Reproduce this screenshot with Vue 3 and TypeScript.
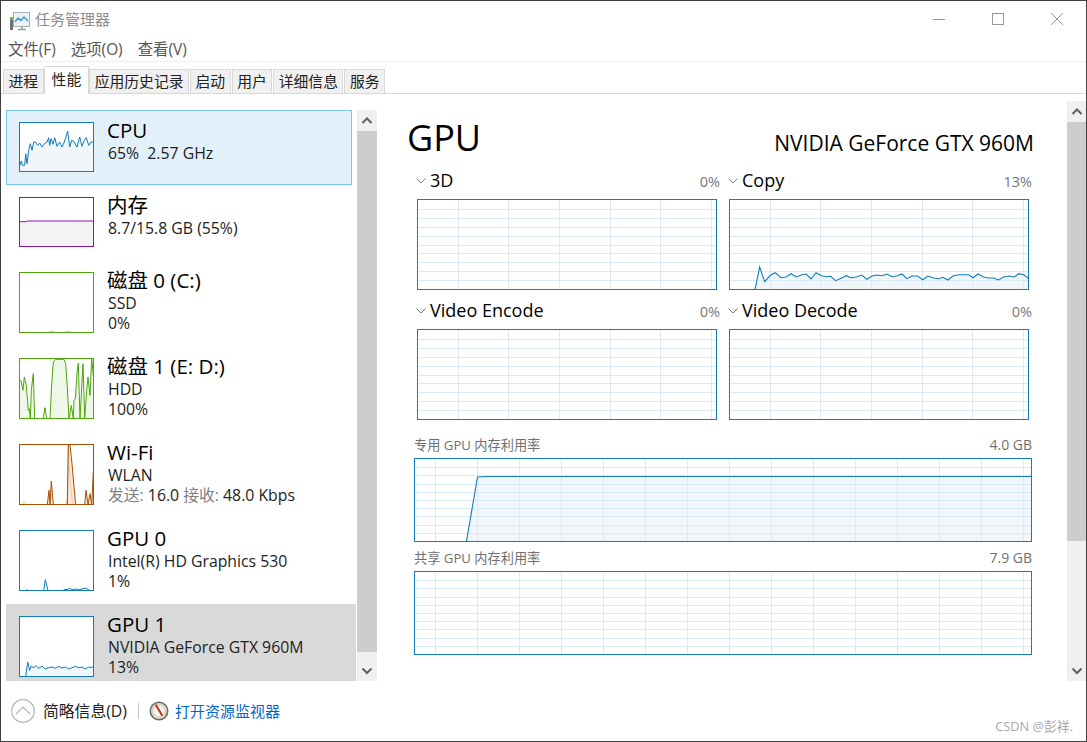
<script setup lang="ts">
interface Thumb {
  key: string
  name: string
  lines: { text: string; muted?: boolean }[][]
  tall: boolean
  state: string
  tone: string
  h: number
  x0: number
  y0: number
  pts: number[]
  extra?: number[]
}

function conv(raw: number[], x0: number, y0: number): number[][] {
  const out: number[][] = []
  for (let i = 0; i < raw.length; i += 2) {
    out.push([+((raw[i] - x0) / 3).toFixed(1), +((raw[i + 1] - y0) / 3).toFixed(1)])
  }
  return out
}
const line = (p: number[][]) => p.map((q) => q.join(',')).join(' ')
function area(p: number[][], bottom: number) {
  if (!p.length) return ''
  return `${p[0][0]},${bottom} ${line(p)} ${p[p.length - 1][0]},${bottom}`
}

const tabs = ['进程', '性能', '应用历史记录', '启动', '用户', '详细信息', '服务']

const items: Thumb[] = [
  {
    key: 'cpu', name: 'CPU', tall: false, state: 'hover', tone: 'blue', h: 48, x0: 59, y0: 368,
    lines: [[{ text: '65%  2.57 GHz' }]],
    pts: [59,495,63,482,66,495,73,495,76,460,80,490,85,450,90,430,95,450,100,425,105,425,112,435,118,428,125,440,132,430,140,425,145,412,148,435,152,415,158,432,163,412,170,438,178,425,185,440,192,425,202,392,208,440,214,420,222,425,230,440,238,410,245,438,252,420,258,412,265,435,272,425,280,425],
  },
  {
    key: 'mem', name: '内存', tall: false, state: '', tone: 'purple', h: 48, x0: 59, y0: 23,
    lines: [[{ text: '8.7/15.8 GB (55%)' }]],
    pts: [59,94,78,94,80,92,280,92],
  },
  {
    key: 'd0', name: '磁盘 0 (C:)', tall: true, state: '', tone: 'green', h: 59, x0: 59, y0: 248,
    lines: [[{ text: 'SSD' }], [{ text: '0%' }]],
    pts: [59,427,146,427,150,424,153,427,156,423,160,427,194,427,198,424,202,427,206,424,210,427,280,427],
  },
  {
    key: 'd1', name: '磁盘 1 (E: D:)', tall: true, state: '', tone: 'green', h: 59, x0: 28, y0: 26,
    lines: [[{ text: 'HDD' }], [{ text: '100%' }]],
    pts: [28,90,31,92,37,120,41,80,47,105,53,180,56,175,59,205,62,120,68,70,72,205,97,205,103,172,108,205,118,205,123,100,128,35,135,27,160,27,165,40,170,110,175,205,182,165,188,205,190,150,194,145,200,60,203,38,208,205,217,40,222,205,228,120,232,80,238,135,243,25,248,75,250,50],
  },
  {
    key: 'wifi', name: 'Wi-Fi', tall: true, state: '', tone: 'orange', h: 59, x0: 28, y0: 284,
    lines: [[{ text: 'WLAN' }], [{ text: '发送:', muted: true }, { text: ' 16.0 ' }, { text: '接收:', muted: true }, { text: ' 48.0 Kbps' }]],
    pts: [28,463,110,463,115,420,118,463,122,392,128,463,170,463,173,285,178,285,184,340,190,410,195,463,222,463,226,420,232,463,238,430,243,463,248,365,250,365],
    extra: [33,463,40,452,45,463,165,463,168,450,171,463,173,285,176,350,180,410,186,463],
  },
  {
    key: 'g0', name: 'GPU 0', tall: true, state: '', tone: 'blue', h: 59, x0: 59, y0: 302,
    lines: [[{ text: 'Intel(R) HD Graphics 530' }], [{ text: '1%' }]],
    pts: [59,481,76,481,80,478,84,481,130,481,135,448,143,481,188,481,192,477,200,478,208,474,215,478,225,476,235,478,245,476,255,473,265,478,270,481,280,481],
  },
  {
    key: 'g1', name: 'GPU 1', tall: true, state: 'active', tone: 'blue', h: 59, x0: 59, y0: 560,
    lines: [[{ text: 'NVIDIA GeForce GTX 960M' }], [{ text: '13%' }]],
    pts: [76,739,82,695,88,720,92,708,100,712,108,706,115,714,125,708,135,716,145,712,155,710,165,714,175,708,185,713,195,710,205,716,215,712,225,708,235,712,245,710,255,716,265,710,272,712,280,707],
  },
]

const view = items.map((it) => {
  const p = conv(it.pts, it.x0, it.y0)
  return {
    ...it,
    poly: line(p),
    fill: area(p, it.h),
    extraLine: it.extra ? line(conv(it.extra, it.x0, it.y0)) : '',
  }
})

const engineV = [40.5, 90.5, 141.5, 192.5, 242.5, 293.5]
const engineH = Array.from({ length: 9 }, (_, i) => Math.round(8.9 * (i + 1)) + 0.5)
const memV = Array.from({ length: 15 }, (_, i) => 20.5 + 42 * i).filter((v) => v < 616)
const memH = Array.from({ length: 9 }, (_, i) => Math.round(8.2 * (i + 1)) + 0.5)

const copyRaw = [104,358,118,290,133,334,150,315,165,307,182,322,197,320,212,310,228,320,245,313,258,311,272,326,287,307,303,316,318,319,331,318,346,331,362,324,378,316,392,322,408,320,424,314,440,327,455,317,470,314,485,316,500,311,515,319,530,316,545,311,560,325,575,317,592,317,607,328,622,317,640,323,655,325,668,321,682,329,698,317,715,313,745,313,758,322,773,311,790,320,805,323,820,323,835,329,850,320,865,317,882,320,895,310,910,313,926,325]
const copyPts = conv(copyRaw, 29, 89)

const engines = [
  { name: '3D', pct: '0%', poly: '', fill: '' },
  { name: 'Copy', pct: '13%', poly: line(copyPts), fill: area(copyPts, 89) },
  { name: 'Video Encode', pct: '0%', poly: '', fill: '' },
  { name: 'Video Decode', pct: '0%', poly: '', fill: '' },
]

const memPts = [[51.5, 82], [62.5, 18], [72, 17.5], [616, 17.5]]
const memories = [
  { label: '专用 GPU 内存利用率', size: '4.0 GB', poly: line(memPts), fill: area(memPts, 82) },
  { label: '共享 GPU 内存利用率', size: '7.9 GB', poly: '', fill: '' },
]
</script>

<template>
  <div class="win">
    <header class="titlebar">
      <svg class="app-icon" width="22" height="20" viewBox="0 0 22 20">
        <rect x="4.5" y="1.5" width="16" height="14" fill="#eaf3f9" stroke="#a9adb0" />
        <polyline points="6,11 9,7 12,9.5 15,6 19,10" fill="none" stroke="#3d97d3" stroke-width="1.4" />
        <path d="M9 18.5h8M13 16v2" stroke="#9a9a9a" stroke-width="1.6" fill="none" />
        <rect x="1" y="6" width="3" height="13" fill="#6d7278" />
        <rect x="1" y="6" width="3" height="3" fill="#5bbf4a" />
      </svg>
      <span class="app-name">任务管理器</span>
      <div class="controls">
        <svg width="14" height="14" viewBox="0 0 14 14"><path d="M1 7.5h12" stroke="#999" fill="none" /></svg>
        <svg width="14" height="14" viewBox="0 0 14 14"><rect x="1.5" y="1.5" width="11" height="11" stroke="#999" fill="none" /></svg>
        <svg width="14" height="14" viewBox="0 0 14 14"><path d="M1 1l12 12M13 1L1 13" stroke="#999" fill="none" /></svg>
      </div>
    </header>

    <nav class="menu">
      <span>文件(F)</span>
      <span>选项(O)</span>
      <span>查看(V)</span>
    </nav>

    <div class="tabs">
      <span v-for="t in tabs" :key="t" class="tab" :class="{ on: t === '性能' }">{{ t }}</span>
    </div>

    <main class="main">
      <section class="side">
        <ul class="list">
          <li v-for="it in view" :key="it.key" class="item" :class="[it.state, { tall: it.tall }]">
            <svg class="thumb" :class="[it.tone, { big: it.tall }]" width="75" :height="it.h + 2">
              <polygon v-if="it.fill" class="area" :points="it.fill" />
              <polyline v-if="it.extraLine" class="extra" :points="it.extraLine" />
              <polyline class="stroke" :points="it.poly" />
            </svg>
            <div class="info">
              <div class="name">{{ it.name }}</div>
              <div v-for="(l, i) in it.lines" :key="i" class="sub">
                <span v-for="(s, j) in l" :key="j" :class="{ muted: s.muted }">{{ s.text }}</span>
              </div>
            </div>
          </li>
        </ul>
        <div class="scroll small">
          <div class="btn up">
            <svg width="12" height="8" viewBox="0 0 12 8"><path d="M1.5 6L6 1.500 10.500 6" /></svg>
          </div>
          <div class="bar grow"></div>
          <div class="btn down">
            <svg width="12" height="8" viewBox="0 0 12 8"><path d="M1.500 1.500L6 6l4.500-4.500" /></svg>
          </div>
        </div>
      </section>

      <section class="detail">
        <div class="head">
          <h1>GPU</h1>
          <span class="model">NVIDIA GeForce GTX 960M</span>
        </div>
        <div class="engines">
          <div v-for="e in engines" :key="e.name" class="engine">
            <div class="engine-head">
              <svg class="chev" width="10" height="6" viewBox="0 0 10 6"><path d="M.5.5L5 5 9.500.5" /></svg>
              <span class="engine-name">{{ e.name }}</span>
              <span class="pct">{{ e.pct }}</span>
            </div>
            <svg class="graph engine-graph" width="300" height="91">
              <polygon v-if="e.fill" class="area" :points="e.fill" />
              <line v-for="x in engineV" :key="'v' + x" class="grid" :x1="x" :x2="x" y1="0" y2="89" />
              <line v-for="y in engineH" :key="'h' + y" class="grid" x1="0" x2="298" :y1="y" :y2="y" />
              <polyline v-if="e.poly" class="stroke" :points="e.poly" />
            </svg>
          </div>
        </div>
        <div class="memories">
          <div v-for="m in memories" :key="m.label" class="memory">
            <div class="mem-head">
              <span class="mem-label">{{ m.label }}</span>
              <span class="mem-size">{{ m.size }}</span>
            </div>
            <svg class="graph mem-graph" width="618" height="84">
              <polygon v-if="m.fill" class="area" :points="m.fill" />
              <line v-for="x in memV" :key="'v' + x" class="grid" :x1="x" :x2="x" y1="0" y2="82" />
              <line v-for="y in memH" :key="'h' + y" class="grid" x1="0" x2="616" :y1="y" :y2="y" />
              <polyline v-if="m.poly" class="stroke" :points="m.poly" />
            </svg>
          </div>
        </div>
      </section>

      <div class="scroll large">
        <div class="btn up">
          <svg width="12" height="8" viewBox="0 0 12 8"><path d="M1.500 6L6 1.500 10.500 6" /></svg>
        </div>
        <div class="bar"></div>
        <div class="rest"></div>
        <div class="btn down">
          <svg width="12" height="8" viewBox="0 0 12 8"><path d="M1.500 1.500L6 6l4.500-4.500" /></svg>
        </div>
      </div>
    </main>

    <footer class="foot">
      <svg class="collapse" width="24" height="24" viewBox="0 0 24 24">
        <circle cx="12" cy="12" r="11.300" />
        <path d="M5 15l7-7 7 7" />
      </svg>
      <span class="brief">简略信息(D)</span>
      <span class="sep"></span>
      <svg class="dial" width="20" height="20" viewBox="0 0 20 20">
        <circle cx="10" cy="10" r="9.500" fill="#6a6a64" />
        <circle cx="10" cy="10" r="8" fill="#d9d5cc" />
        <circle cx="10" cy="10" r="6.400" fill="#e9dcc8" />
        <circle cx="10" cy="10" r="5" fill="#faf8f4" />
        <path d="M6.700 3.800l6.600 11" stroke="#c8281e" stroke-width="2" fill="none" />
      </svg>
      <span class="link">打开资源监视器</span>
      <span class="mark">CSDN @彭祥.</span>
    </footer>
  </div>
</template>

<style scoped>
.win {
  position: relative;
  width: 1087px;
  height: 742px;
  box-sizing: border-box;
  border: 1px solid #404040;
  background: #fff;
  display: flex;
  flex-direction: column;
  overflow: hidden;
  font-family: "Open Sans", "Noto Sans CJK SC", sans-serif;
  color: #000;
}
.titlebar {
  height: 37px;
  display: flex;
  align-items: center;
  padding-left: 8px;
  flex: none;
}
.app-icon {
  margin-right: 4px;
  margin-top: 2px;
}
.app-name {
  font-size: 15px;
  color: #8c8c8c;
  margin-top: -2px;
}
.controls {
  margin-left: auto;
  margin-right: 22px;
  margin-top: -1px;
  display: flex;
  gap: 45px;
}
.menu {
  height: 23px;
  flex: none;
  display: flex;
  align-items: center;
  gap: 15px;
  padding: 0 0 2px 7px;
  box-sizing: content-box;
  height: 21px;
  font-size: 15.4px;
  color: #555;
  border-bottom: 1px solid #f0f0f0;
}
.tabs {
  height: 31px;
  flex: none;
  display: flex;
  align-items: flex-end;
  padding-left: 2px;
  border-bottom: 1px solid #d9d9d9;
}
.tab {
  height: 25px;
  box-sizing: border-box;
  margin-bottom: -1px;
  padding: 0 4.5px;
  font-size: 14.8px;
  line-height: 22px;
  color: #222;
  background: #f0f0f0;
  border: 1px solid #d9d9d9;
  margin-right: 1px;
  white-space: nowrap;
}
.tab.on {
  height: 28px;
  padding: 0 7px;
  line-height: 24px;
  background: #fff;
  border-bottom: 0;
  margin-right: 0;
  margin-left: -1px;
}
.main {
  height: 587px;
  flex: none;
  display: flex;
}
.side {
  width: 376px;
  flex: none;
  box-sizing: border-box;
  padding: 16px 0 0 5px;
  display: flex;
  gap: 1px;
}
.list {
  list-style: none;
  margin: 0;
  padding: 0;
  width: 350px;
  height: 571px;
  overflow: hidden;
  flex: none;
}
.item {
  height: 75px;
  box-sizing: border-box;
  display: flex;
  align-items: flex-start;
  padding-left: 12px;
  border: 1px solid transparent;
}
.item.tall {
  height: 86px;
}
.item.hover {
  width: 346px;
  background: #e2f1f9;
  border-color: #7cc5e8;
}
.item.active {
  background: #d9d9d9;
}
.thumb {
  flex: none;
  margin-top: 11px;
  box-sizing: border-box;
  background: #fff;
  border: 1px solid;
  height: 50px;
}
.thumb.big {
  height: 61px;
}
.info {
  margin: 6px 0 0 13px;
  white-space: nowrap;
}
.name {
  font-size: 20.5px;
  line-height: 26px;
}
.sub {
  font-size: 15.8px;
  line-height: 20px;
  color: #222;
  white-space: pre;
  margin-left: 1px;
}
.muted {
  color: #808080;
}
.area {
  stroke: none;
}
.stroke,
.extra {
  fill: none;
  stroke-width: 1;
}
.extra {
  stroke-dasharray: 1 1;
  opacity: 0.7;
}
.blue { border-color: #117dbb; }
.blue .stroke, .blue .extra { stroke: #117dbb; }
.blue .area { fill: #f1f6fa; }
.purple { border-color: #8b12ae; }
.purple .stroke { stroke: #8b12ae; }
.purple .area { fill: #f4f2f4; }
.green { border-color: #4da60c; }
.green .stroke { stroke: #4da60c; }
.green .area { fill: #eff7e9; }
.orange { border-color: #a74f01; }
.orange .stroke { stroke: #a74f01; }
.orange .extra { stroke: #d98a4a; }
.orange .area { fill: #fcebdc; }

.scroll {
  width: 20px;
  flex: none;
  display: flex;
  flex-direction: column;
  background: #f0f0f0;
}
.scroll.small {
  height: 571px;
}
.scroll.large {
  width: 19px;
  height: 580px;
  margin-top: 7px;
}
.btn {
  flex: none;
  display: flex;
  justify-content: center;
}
.btn.up {
  height: 21px;
  padding-top: 7px;
  box-sizing: border-box;
}
.btn.down {
  height: 29px;
  padding-top: 15px;
  box-sizing: border-box;
}
.btn svg {
  fill: none;
  stroke: #606060;
  stroke-width: 2;
}
.bar {
  background: #cdcdcd;
}
.bar.grow {
  flex: 1;
}
.large .bar {
  height: 419px;
  flex: none;
}
.large .rest {
  flex: 1;
}
.detail {
  flex: 1;
  min-width: 0;
  padding-left: 37px;
}
.head {
  width: 627px;
  height: 75px;
  box-sizing: border-box;
  padding-top: 19px;
  margin-left: -7px;
  display: flex;
  align-items: baseline;
  justify-content: space-between;
}
h1 {
  margin: 0;
  font-size: 36px;
  line-height: 50px;
  font-weight: 400;
}
.model {
  font-size: 21px;
  line-height: 28px;
}
.engines {
  display: grid;
  grid-template-columns: 306px 306px;
  column-gap: 6px;
  row-gap: 9px;
}
.engine-head {
  height: 24px;
  display: flex;
  align-items: center;
  margin-bottom: 6px;
}
.chev {
  flex: none;
  margin: 0 4px 0 2px;
  fill: none;
  stroke: #777;
}
.engine-name {
  font-size: 18px;
  line-height: 24px;
  margin-top: -2px;
}
.pct {
  margin-left: auto;
  font-size: 14.5px;
  color: #777;
}
.graph {
  display: block;
  box-sizing: border-box;
  border: 1px solid #117dbb;
  background: #fff;
}
.engine-graph {
  margin-left: 3px;
}
.grid {
  stroke: #d9eaf4;
  stroke-width: 1;
}
.graph .area {
  fill: #f1f6fa;
}
.graph .stroke {
  stroke: #117dbb;
  stroke-width: 1.1;
}
.memories {
  margin-top: 16px;
  display: flex;
  flex-direction: column;
  gap: 7px;
  width: 618px;
}
.mem-head {
  height: 18px;
  margin-bottom: 4px;
  display: flex;
  justify-content: space-between;
  align-items: center;
  color: #707070;
}
.mem-label {
  font-size: 13.2px;
  line-height: 16px;
}
.mem-size {
  font-size: 14px;
  line-height: 16px;
}
.foot {
  flex: 1;
  display: flex;
  align-items: center;
  padding-left: 10px;
  margin-top: -1px;
}
.collapse {
  flex: none;
  fill: none;
  stroke: #b5b5b5;
  stroke-width: 1.2;
}
.brief {
  margin-left: 8px;
  font-size: 15.8px;
  color: #222;
}
.sep {
  width: 1px;
  height: 16px;
  margin: 0 10px 0 11px;
  background: #c8c8c8;
}
.dial {
  flex: none;
}
.link {
  margin-left: 6px;
  font-size: 15px;
  color: #0066cc;
}
.mark {
  position: absolute;
  right: 13px;
  bottom: 6px;
  font-size: 12.8px;
  color: #a8a8a8;
}
</style>

<style>
html,
body {
  margin: 0;
  background: #fff;
  overflow: hidden;
}
</style>
